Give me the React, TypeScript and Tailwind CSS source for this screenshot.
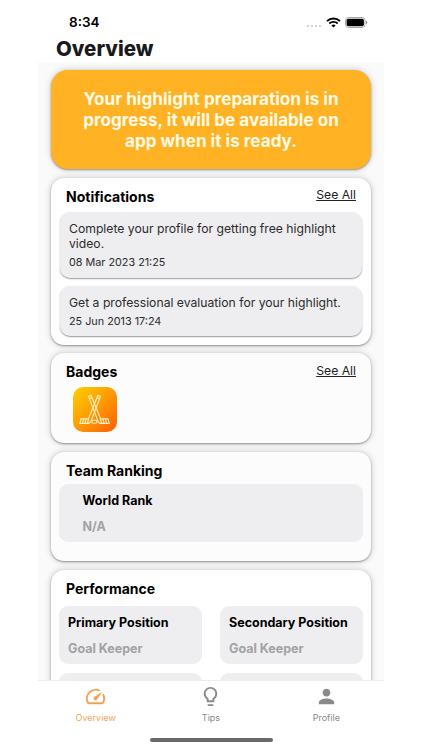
import type { ReactNode } from "react";
import clsx from "clsx";
import { MdLightbulbOutline, MdOutlineSpeed, MdPerson } from "react-icons/md";

//!mocks
const notifications = [
  {
    text: "Complete your profile for getting free highlight video.",
    date: "08 Mar 2023 21:25",
    className: "h-[66px]",
  },
  {
    text: "Get a professional evaluation for your highlight.",
    date: "25 Jun 2013 17:24",
    className: "h-[50px] mt-2",
  },
];

const positions = [
  { title: "Primary Position", value: "Goal Keeper" },
  { title: "Secondary Position", value: "Goal Keeper" },
];

//!components
type CardProps = {
  title: string;
  seeAll?: boolean;
  className?: string;
  linkClassName?: string;
  children: ReactNode;
};

const Card = ({ title, seeAll, className, linkClassName, children }: CardProps) => (
  <section
    className={clsx(
      "w-full shrink-0 rounded-[13px] px-2 shadow-[0_1px_2px_rgba(0,0,0,0.36),0_0_7px_rgba(0,0,0,0.2)]",
      className,
    )}
  >
    <div className="flex h-[33px] items-start justify-between pl-[7px] pr-[7px] pt-[9px]">
      <h2 className="text-[14px] font-bold leading-[19px] text-black">
        {title}
      </h2>
      {seeAll && (
        <a
          className={clsx(
            "text-[12.2px] text-[#222] underline underline-offset-[1px]",
            linkClassName,
          )}
        >
          See All
        </a>
      )}
    </div>
    {children}
  </section>
);

const StatusBar = () => (
  <div className="flex h-[38px] items-start justify-between pl-[31px] pr-[15px] pt-[14px]">
    <span className="text-[13.5px] font-semibold leading-[17px] text-black">
      8:34
    </span>
    <div className="flex items-center pt-[3px]">
      <div className="mr-[5px] mt-[7px] flex gap-[1.5px]">
        {[0, 1, 2, 3].map((dot) => (
          <i key={dot} className="size-[2.5px] rounded-full bg-[#c4c4c4]" />
        ))}
      </div>
      <svg width="15" height="11" viewBox="0 0 15 11" fill="none" stroke="#000">
        <path d="M1 4.1a9.4 9.4 0 0 1 13 0" strokeWidth="2" />
        <path d="M3.3 6.5a6 6 0 0 1 8.4 0" strokeWidth="1.8" />
        <path d="M5.4 8.4a3.1 3.1 0 0 1 4.2 0L7.5 10.6z" fill="#000" stroke="none" />
      </svg>
      <svg className="ml-[4px] mr-[1px]" width="23" height="11" viewBox="0 0 23 11">
        <rect x=".5" y=".5" width="19.5" height="10" rx="3" fill="none" stroke="#a6a6a6" />
        <rect x="1.6" y="1.7" width="17.3" height="7.6" rx="1.8" />
        <path d="M21 3.8c1.6.4 1.6 3 0 3.4z" fill="#888" />
      </svg>
    </div>
  </div>
);

const HockeyBadge = () => (
  <div className="ml-[13.5px] flex size-[44.5px] items-center justify-center rounded-[10px] bg-linear-to-br from-[#ffd000] via-[#ff9a05] to-[#ff5a00]">
    <svg width="31" height="31" viewBox="0 0 31 31" fill="none" stroke="#fff3c4" strokeWidth="1.1">
      <path d="M9.5 2.4l2.5-1.2L21.7 24.9h7.3l1.2 4.5h-9.2l-1.7-1.5z" />
      <path d="M21.5 2.4l-2.5-1.2L9.3 24.9H2L.8 29.4H10l1.7-1.5z" />
      <path d="M10.7 4.8l2.3-1M20.3 4.8l-2.3-1" />
      <path d="M3.5 29l1.2-4M6 29l1.2-4M8.5 29l1.2-4M27.5 29l-1.2-4M25 29l-1.2-4M22.5 29l-1.2-4" />
      <rect x="13" y="26.3" width="5" height="3" rx="1.2" />
    </svg>
  </div>
);

const tabs = [
  { label: "Overview", Icon: MdOutlineSpeed, color: "text-[#f2a256]" },
  { label: "Tips", Icon: MdLightbulbOutline, color: "text-[#8a8a8a]" },
  { label: "Profile", Icon: MdPerson, color: "text-[#8a8a8a]" },
];

const TabBar = () => (
  <nav className="h-[70px] shrink-0 border-t border-[#ececec] bg-white">
    <div className="grid h-[57px] grid-cols-3">
      {tabs.map(({ label, Icon, color }) => (
        <div key={label} className={clsx("flex flex-col items-center pt-[4px]", color)}>
          <Icon size={23} />
          <span className="mt-[4px] text-[9px] leading-[12px]">{label}</span>
        </div>
      ))}
    </div>
    <div className="mx-auto h-[4px] w-[123px] rounded-full bg-[#6a6a6a]" />
  </nav>
);

const App = () => (
  <div className="min-h-[750px] bg-white font-['Inter',sans-serif]">
    <main className="ml-[38px] flex h-[750px] w-[346px] flex-col overflow-hidden">
      <StatusBar />
      <h1 className="h-[24px] shrink-0 pl-[18px] text-[20.5px] font-extrabold leading-[22px] text-[#1a1a1c]">
        Overview
      </h1>
      <div className="flex min-h-0 flex-1 flex-col overflow-hidden bg-[#fafafa] px-[13px] pt-[8px]">
        <div className="flex h-[99px] w-full shrink-0 items-center justify-center rounded-[17px] bg-[#ffb224] text-center text-[17.1px] font-bold leading-[21px] text-[#fffbe6] shadow-[0_1px_2px_rgba(0,0,0,0.36),0_0_7px_rgba(0,0,0,0.2)]">
          <p>
            Your highlight preparation is in
            <br />
            progress, it will be available on
            <br />
            app when it is ready.
          </p>
        </div>

        <Card
          title="Notifications"
          seeAll
          className="mt-[9px] h-[167px] bg-white"
          linkClassName="leading-[15px]"
        >
          <div className="px-[1px] pt-[0.5px]">
            {notifications.map((item) => (
              <div
                key={item.date}
                className={clsx(
                  "rounded-[10px] bg-[#eeeef0] px-[9px] pt-[9px] text-[#2b2b2d] shadow-[0_1px_1.5px_rgba(0,0,0,0.4)]",
                  item.className,
                )}
              >
                <p className="text-[12.2px] leading-[15px]">{item.text}</p>
                <p className="mt-[5.5px] text-[10.8px] leading-[14px]">{item.date}</p>
              </div>
            ))}
          </div>
        </Card>

        <Card
          title="Badges"
          seeAll
          className="mt-[8px] h-[90px] bg-[#fcfcfc]"
          linkClassName="leading-[17px]"
        >
          <div className="pt-[1px]">
            <HockeyBadge />
          </div>
        </Card>

        <Card title="Team Ranking" className="mt-[9px] h-[109px] bg-[#fcfcfc]">
          <div className="-mt-[1px] h-[58px] rounded-[9px] bg-[#eeeef0] pl-[23.5px] pt-[8.5px] text-[12.5px] font-bold leading-[16px]">
            <p className="text-black">World Rank</p>
            <p className="mt-[10px] text-[#a2a2a4]">N/A</p>
          </div>
        </Card>

        <Card title="Performance" className="mt-[9px] h-[200px] bg-white">
          <div className="grid grid-cols-2 gap-x-[18px] gap-y-[9px] pt-[3px]">
            {positions.map((item) => (
              <div
                key={item.title}
                className="h-[58px] rounded-[9px] bg-[#eeeef0] pl-[9px] pt-[8.5px] text-[12.5px] font-bold leading-[16px]"
              >
                <p className="whitespace-nowrap text-black">{item.title}</p>
                <p className="mt-[10px] text-[#a2a2a4]">{item.value}</p>
              </div>
            ))}
            <div className="h-[58px] rounded-[9px] bg-[#eeeef0]" />
            <div className="h-[58px] rounded-[9px] bg-[#eeeef0]" />
          </div>
        </Card>
      </div>
      <TabBar />
    </main>
  </div>
);

export default App;
